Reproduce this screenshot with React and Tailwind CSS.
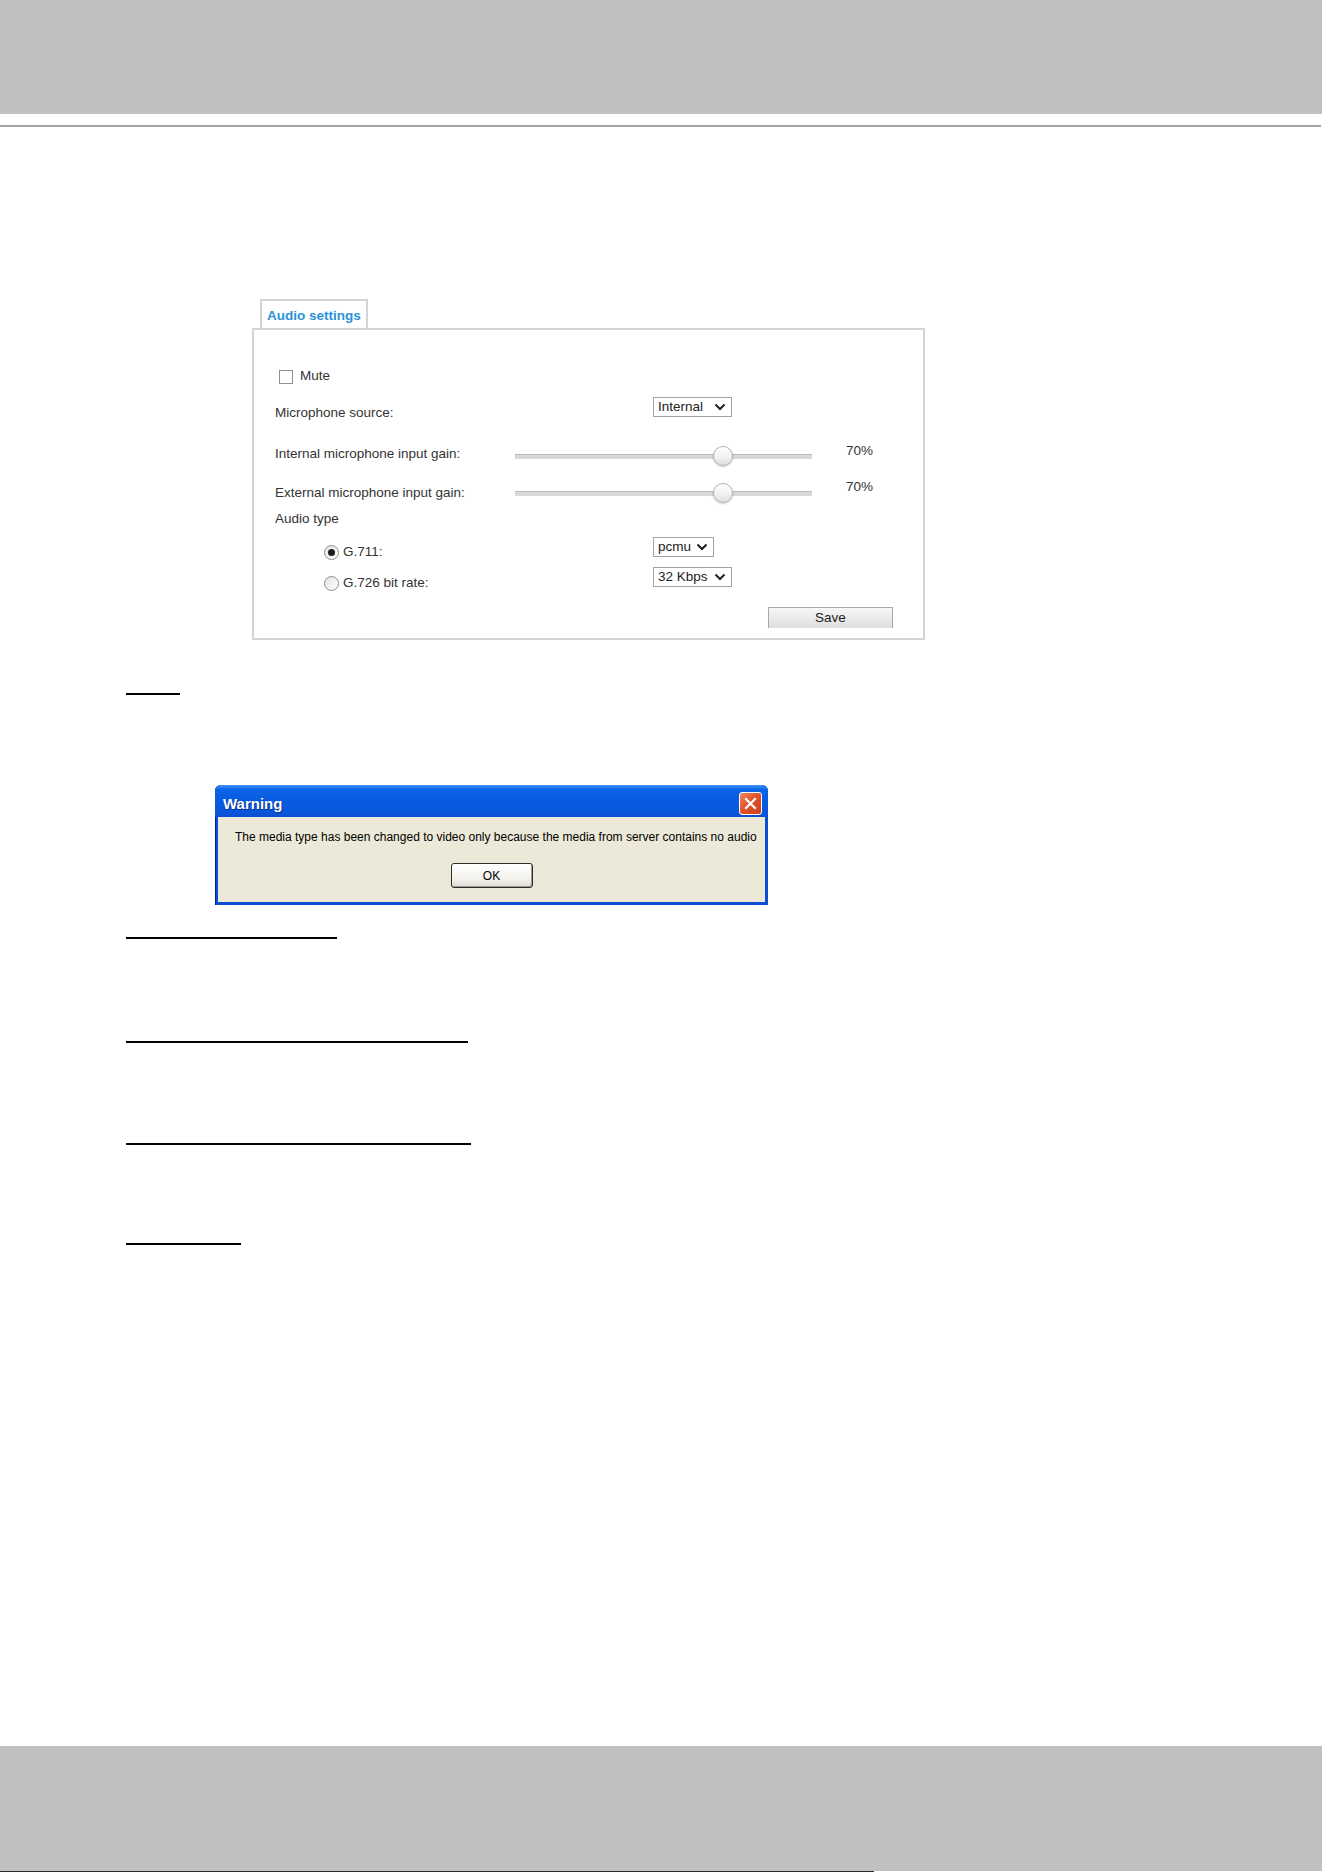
import React from 'react';

const FONT = "font-['Liberation_Sans',Arial,sans-serif]";

const Chevron = () => (
  <svg width="12" height="8" viewBox="0 0 12 8" className="shrink-0">
    <polyline points="1.5,1.5 6,6 10.5,1.5" fill="none" stroke="#1f1f1f" strokeWidth="2" />
  </svg>
);

function FakeSelect({ value, className }) {
  return (
    <div className={`h-[20px] flex items-center justify-between pl-[4px] pr-[5px] border border-[#a3a3a3] bg-white text-[13.5px] leading-none text-[#222] ${className}`}>
      <span>{value}</span>
      <Chevron />
    </div>
  );
}

function Slider({ value }) {
  return (
    <div className="relative w-[297px] h-[20px] flex items-center">
      <div className="w-full h-[5px] bg-[#d8d8d8] border-t border-[#bcbcbc]" />
      {/* thumb sits on top of the track */}
      <div
        className="absolute top-0 w-[20px] h-[20px] rounded-full border border-[#b3b3b3] bg-[linear-gradient(180deg,#ffffff_0%,#f2f2f2_55%,#dedede_100%)] shadow-[0_1px_2px_rgba(0,0,0,0.2)]"
        style={{ left: `calc(${value}% - 10px)` }}
      />
    </div>
  );
}

function Radio({ checked }) {
  return (
    <div className="w-[15px] h-[15px] rounded-full border border-[#8d8d8d] bg-[linear-gradient(135deg,#e4e4e4,#ffffff)] flex items-center justify-center shrink-0">
      {checked && <div className="w-[7px] h-[7px] rounded-full bg-[#1b1b1b]" />}
    </div>
  );
}

function AudioSettings() {
  return (
    <div className="ml-[252px] w-[673px] mt-[172px] text-[#333]">
      {/* tab header */}
      <div className="ml-[8px] w-[108px] h-[29px] border-2 border-b-0 border-[#d6d4ce] bg-white pl-[5px] pt-[2px]">
        <span className="text-[13.5px] leading-[16px] font-bold text-[#2b92d6]">Audio settings</span>
      </div>

      <div className="h-[312px] border-2 border-[#d6d4ce] pl-[21px] flex flex-col text-[13.5px] leading-[16px]">
        {/* Mute */}
        <div className="mt-[40px] h-[14px] flex items-center">
          <div className="ml-[4px] w-[14px] h-[14px] border border-[#8f8f8f] bg-white" />
          <span className="ml-[7px] -mt-[3px]">Mute</span>
        </div>

        {/* Microphone source */}
        <div className="mt-[13px] h-[20px] flex items-start">
          <span className="w-[378px] pt-[8px]">Microphone source:</span>
          <FakeSelect value="Internal" className="w-[79px]" />
        </div>

        {/* Internal gain */}
        <div className="mt-[25px] flex items-start">
          <span className="w-[240px] mt-[4px]">Internal microphone input gain:</span>
          <div className="mt-[4px]">
            <Slider value={70} />
          </div>
          <span className="ml-[34px] mt-[1px]">70%</span>
        </div>

        {/* External gain */}
        <div className="mt-[13px] flex items-start">
          <span className="w-[240px] mt-[6px]">External microphone input gain:</span>
          <div className="mt-[4px]">
            <Slider value={70} />
          </div>
          <span className="ml-[34px]">70%</span>
        </div>

        <div className="mt-[8px]">Audio type</div>

        {/* G.711 */}
        <div className="mt-[10px] flex items-start">
          <div className="w-[378px] pl-[49px] mt-[7px] h-[16px] flex items-center">
            <Radio checked />
            <span className="ml-[4px]">G.711:</span>
          </div>
          <FakeSelect value="pcmu" className="w-[61px]" />
        </div>

        {/* G.726 */}
        <div className="mt-[7px] flex items-start">
          <div className="w-[378px] pl-[49px] mt-[8px] h-[16px] flex items-center">
            <Radio />
            <span className="ml-[4px]">G.726 bit rate:</span>
          </div>
          <FakeSelect value="32 Kbps" className="w-[79px]" />
        </div>

        <div className="mt-[16px] ml-[493px] w-[125px] h-[21px] border border-b-0 border-[#a9a9a9] bg-[linear-gradient(180deg,#f7f7f7,#dedede)] flex items-center justify-center text-[#222]">
          Save
        </div>
      </div>
    </div>
  );
}

function WarningDialog() {
  return (
    <div className="mt-[90px] ml-[215px] w-[553px] h-[120px] flex flex-col rounded-t-[6px] bg-[#0a4fd4] shadow-[inset_1px_1px_0_#001f8f]">
      {/* title bar */}
      <div className="h-[32px] rounded-t-[6px] flex items-start justify-between pl-[8px] pr-[6px] bg-[linear-gradient(180deg,#3f96fb_0%,#0b64e6_14%,#075ade_55%,#0a56db_85%,#0a4ecf_100%)]">
        <span className="mt-[10px] text-[15px] leading-[17px] font-bold text-white [text-shadow:1px_1px_0_#0a2a8a]">Warning</span>
        <div className="mt-[7px] w-[23px] h-[23px] rounded-[3px] border border-white bg-[linear-gradient(135deg,#f08a64,#e1532a_45%,#c8401c)] flex items-center justify-center">
          <svg width="13" height="13" viewBox="0 0 13 13">
            <path d="M2 2 L11 11 M11 2 L2 11" stroke="#fff" strokeWidth="2.2" strokeLinecap="square" />
          </svg>
        </div>
      </div>
      {/* body */}
      <div className="flex-1 mx-[3px] mb-[3px] bg-[#ece9d8] flex flex-col items-center text-[12px] leading-[14px] text-black">
        <p className="mt-[13px] self-start ml-[17px]">
          The media type has been changed to video only because the media from server contains no audio
        </p>
        <div className="mt-[19px] w-[82px] h-[25px] rounded-[3px] border border-[#2d2d2d] bg-[linear-gradient(180deg,#ffffff,#f1f0ea_70%,#dcdad0)] shadow-[inset_-1px_-1px_0_#9c9a90] flex items-center justify-center">
          OK
        </div>
      </div>
    </div>
  );
}

// underline rules below the dialog, each with its own spacing
const rules = [
  'mt-[32px] w-[211px]',
  'mt-[102px] w-[342px]',
  'mt-[100px] w-[345px]',
  'mt-[98px] w-[115px]',
];

export default function App() {
  return (
    <div className={`w-[1324px] h-[1872px] bg-white flex flex-col ${FONT}`}>
      {/* header band */}
      <div className="h-[114px] mr-[2px] bg-[#bfc0bf]" />
      <div className="mt-[11px] h-[2px] mr-[3px] bg-[#a2a2a2]" />

      <AudioSettings />

      <div className="mt-[53px] ml-[126px] w-[54px] h-[2px] bg-black" />

      <WarningDialog />

      {rules.map((c) => (
        <div key={c} className={`ml-[126px] h-[2px] bg-black ${c}`} />
      ))}

      {/* footer band */}
      <div className="mt-auto h-[126px] mr-[2px] flex flex-col">
        <div className="flex-1 bg-[#bfc0bf]" />
        <div className="h-[1px] w-[874px] bg-[#2a2a2a]" />
      </div>
    </div>
  );
}
